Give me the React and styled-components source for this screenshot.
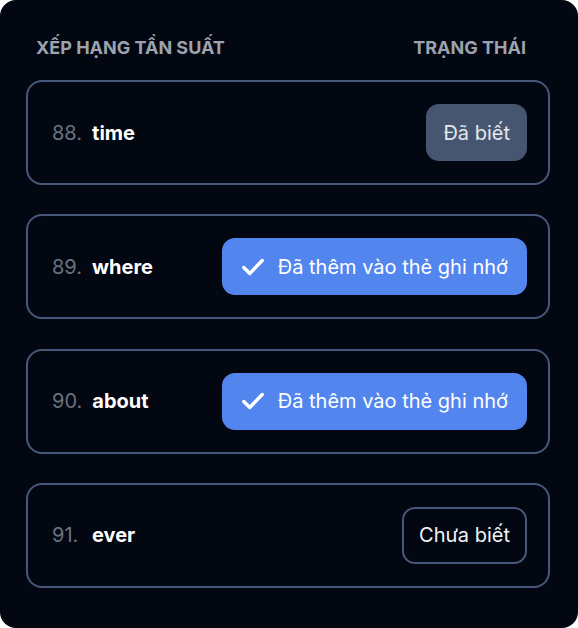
import styled, { createGlobalStyle } from 'styled-components';

const GlobalStyle = createGlobalStyle`
  body {
    margin: 0;
    background: #ffffff;
    font-family: Inter, "Noto Sans", sans-serif;
  }
`;

const Panel = styled.div`
  width: 578px;
  height: 628px;
  box-sizing: border-box;
  padding: 34px 28px 0 26px;
  background: #030712;
  border-radius: 16px;
`;

const Header = styled.div`
  display: flex;
  justify-content: space-between;
  padding: 0 24px 0 10px;
  margin-bottom: 19px;
  font-size: 18px;
  line-height: 27px;
  font-weight: 700;
  color: #9ca3af;
  text-transform: uppercase;
`;

const List = styled.ul`
  list-style: none;
  margin: 0;
  padding: 0;
  display: flex;
  flex-direction: column;
  gap: 29.3px;
`;

const Card = styled.li`
  display: flex;
  align-items: center;
  justify-content: space-between;
  height: 105px;
  box-sizing: border-box;
  padding: 0 21px 0 24px;
  border: 2px solid #48587a;
  border-radius: 16px;
`;

const Word = styled.div`
  display: flex;
  align-items: baseline;
  gap: 10px;
  font-size: 20px;
`;

const Rank = styled.span`
  min-width: 30px;
  color: #6b7280;
  font-weight: 400;
`;

const Term = styled.span`
  color: #ffffff;
  font-weight: 700;
`;

const variants = {
  known: 'background: #475670; border: 2px solid #475670; color: #e5e7eb; padding: 0 15px;',
  added: 'background: #5285ee; border: 2px solid #5285ee; color: #ffffff; padding: 0 17px 0 16px;',
  unknown: 'background: transparent; border: 2px solid #48587a; color: #f1f5f9; padding: 0 15px;',
};

const StatusButton = styled.button`
  display: flex;
  align-items: center;
  gap: 12px;
  height: 57px;
  box-sizing: border-box;
  border-radius: 13px;
  font-family: Inter, "Noto Sans", sans-serif;
  font-size: 20px;
  font-weight: 400;
  ${({ $variant }) => variants[$variant]}
`;

function Check() {
  return (
    <svg width="26" height="26" viewBox="0 0 24 24" fill="none" stroke="#fff" strokeWidth="3.2" strokeLinecap="round" strokeLinejoin="round">
      <path d="M3.5 12.5l5.5 5.5L20.5 6" />
    </svg>
  );
}

const words = [
  { rank: 88, term: 'time', status: 'known' },
  { rank: 89, term: 'where', status: 'added' },
  { rank: 90, term: 'about', status: 'added' },
  { rank: 91, term: 'ever', status: 'unknown' },
];

const labels = {
  known: 'Đã biết',
  added: 'Đã thêm vào thẻ ghi nhớ',
  unknown: 'Chưa biết',
};

export default function App() {
  return (
    <>
      <GlobalStyle />
      <Panel>
        <Header>
          <span>Xếp hạng tần suất</span>
          <span>Trạng thái</span>
        </Header>
        <List>
          {words.map((w) => (
            <Card key={w.rank}>
              <Word>
                <Rank>{w.rank}.</Rank>
                <Term>{w.term}</Term>
              </Word>
              <StatusButton $variant={w.status}>
                {w.status === 'added' && <Check />}
                {labels[w.status]}
              </StatusButton>
            </Card>
          ))}
        </List>
      </Panel>
    </>
  );
}
